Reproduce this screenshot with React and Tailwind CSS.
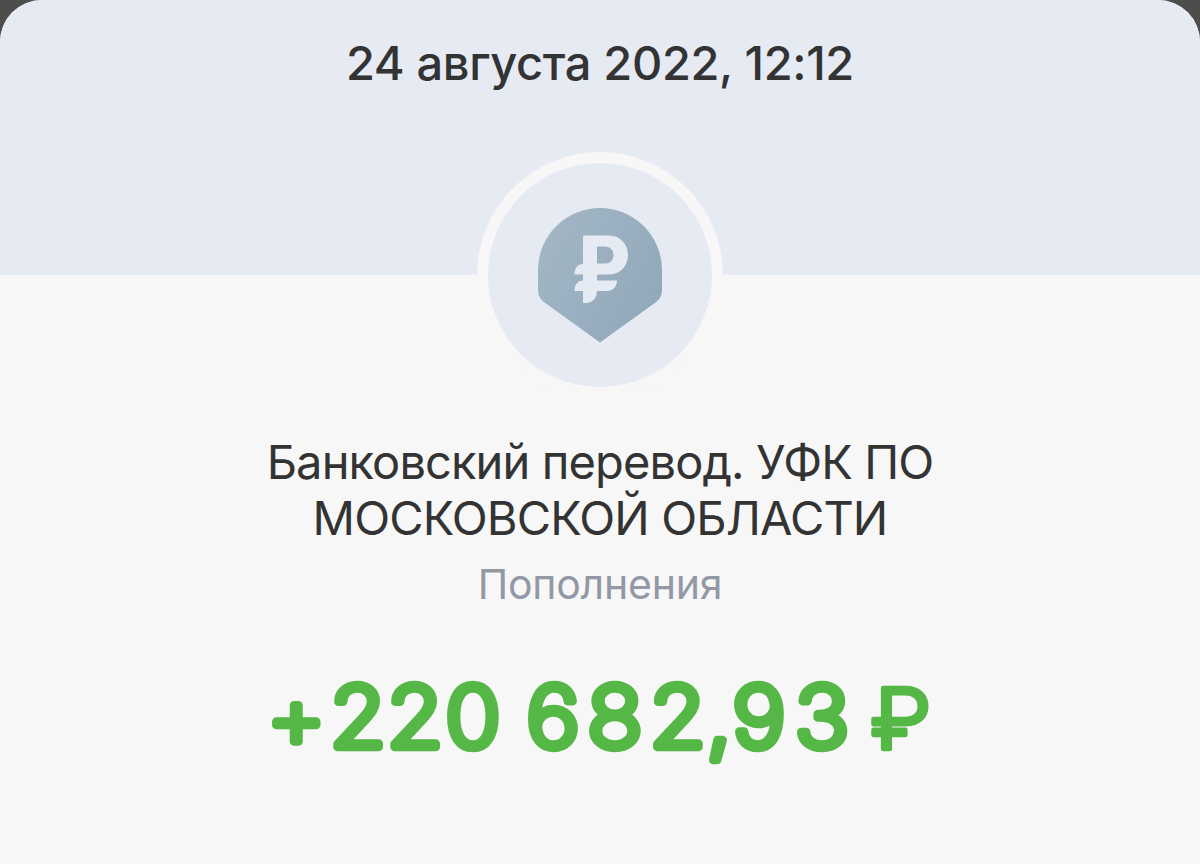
export default function App() {
  return (
    <div className="h-[864px] w-[1200px] overflow-hidden bg-[#4d4d4d] font-[Inter,'Liberation_Sans',sans-serif]">
      <main className="flex h-full flex-col items-center overflow-hidden rounded-t-[42px] bg-[#f7f7f7] text-[#333333]">
        <header className="flex h-[275px] w-full shrink-0 justify-center bg-[#e6eaf3] pt-8">
          <time className="text-[47px] leading-[62px] font-medium tracking-[-0.37px] whitespace-nowrap">24 августа 2022, 12:12</time>
        </header>
        <div className="z-10 -mt-[123px] flex size-[246px] shrink-0 items-center justify-center rounded-full bg-[#f7f7f7]">
          <div className="flex size-[224px] items-center justify-center rounded-full bg-[#e6eaf3]">
            <svg width="124" height="135" viewBox="538 207.500 124 135">
              <defs>
                <linearGradient id="badge" x1="0" y1="0.2" x2="1" y2="0.8">
                  <stop offset="0" stopColor="#a2b6c5" />
                  <stop offset="1" stopColor="#91a8ba" />
                </linearGradient>
              </defs>
              <path fill="url(#badge)" d="M538 269.500a62 62 0 0 1 124 0v20q0 8-6.500 12.500L600 342l-55.500-40q-6.500-4.500-6.500-12.500z" />
              <path fill="#e6eaf3" fillRule="evenodd" d="M583 235h26c11 0 19 8.500 19 19.500s-8 19.500-19 19.500h-12v6h20c0 6-4 10.500-10 10.500h-10c0 7-4.500 12-11 12h-3v-12h-8.500c0-6 3-10.500 8.500-10.500v-6h-8.500c0-6 3-10.500 8.500-10.500zM597 246v17h8c5 0 8.500-3.500 8.500-8.500s-3.500-8.500-8.500-8.500z" />
            </svg>
          </div>
        </div>
        <section className="flex flex-col items-center pt-9 text-center">
          <h1 className="text-[47px] leading-14 font-normal tracking-[-0.88px] whitespace-nowrap">Банковский перевод. УФК ПО<br />МОСКОВСКОЙ ОБЛАСТИ</h1>
          <p className="mt-3.5 text-[41px] leading-12 tracking-[-0.2px] text-[#9299a5]">Пополнения</p>
          {/* Rounded line joins soften the corners of the amount's numerals. */}
          <svg className="mt-[52px] fill-[#55b745] stroke-[#55b745]" width="680" height="110" viewBox="0 660 680 110" strokeWidth="8.500" strokeLinejoin="round">
            <text transform="scale(1.08 1)" y="747" x="6.5 64.800 117.600 171.800 226 246.800 303.200 361 413.700 437.500 495.400 543 565.500" className="text-[84px] font-extralight">+220 682,93 <tspan y="749" className="text-[84px] font-light" strokeWidth="4.500">₽</tspan></text>
          </svg>
        </section>
      </main>
    </div>
  );
}
